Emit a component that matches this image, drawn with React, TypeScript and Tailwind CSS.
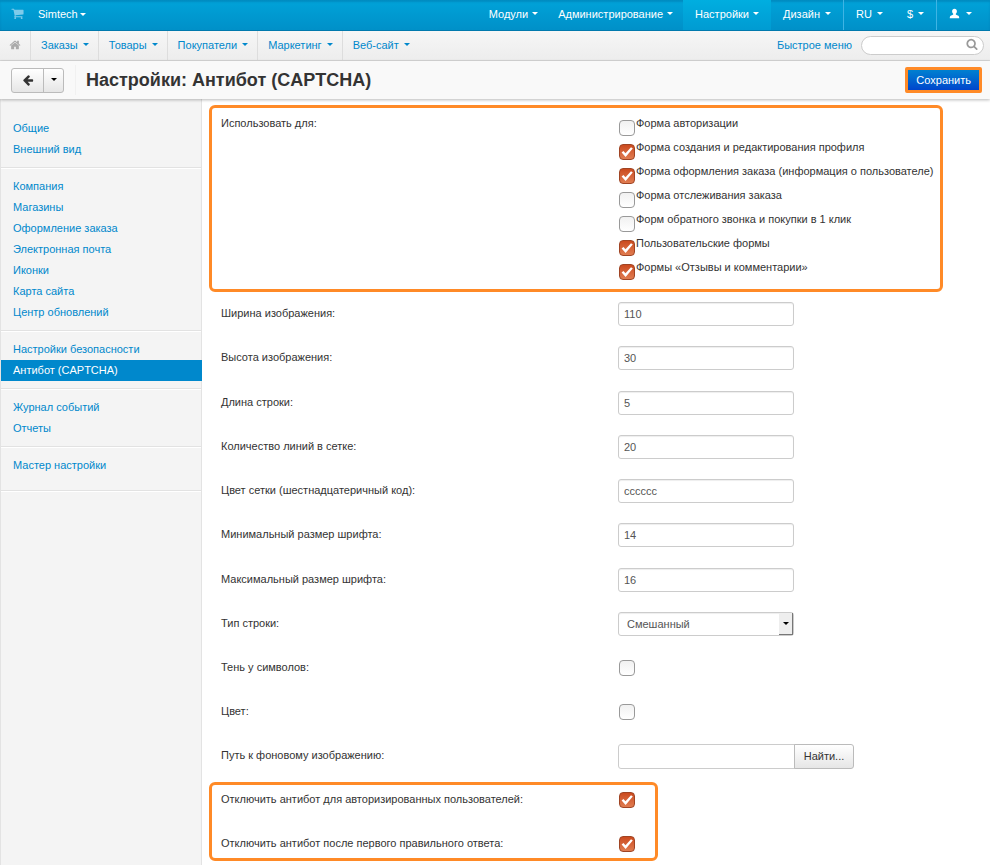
import { useId } from "react";
import type { ReactNode } from "react";

const glyphs = {
  cart: "M704 1536q0 52-38 90t-90 38-90-38-38-90 38-90 90-38 90 38 38 90zm896 0q0 52-38 90t-90 38-90-38-38-90 38-90 90-38 90 38 38 90zm128-1088v512q0 24-16.5 42.5t-40.5 21.5l-1044 122q13 60 13 70 0 16-24 64h920q26 0 45 19t19 45-19 45-45 19h-1024q-26 0-45-19t-19-45q0-11 8-31.5t16-36 21.5-40 15.5-29.5l-177-823h-204q-26 0-45-19t-19-45 19-45 45-19h256q16 0 28.5 6.5t19.5 15.5 13 24.5 8 26 5.5 29.5 4.5 26h1201q26 0 45 19t19 45z",
  home: "M1472 992v480q0 26-19 45t-45 19h-384v-384h-256v384h-384q-26 0-45-19t-19-45v-480q0-1 .5-3t.5-3l575-474 575 474q1 2 1 6zm223-69l-62 74q-8 9-21 11h-3q-13 0-21-7l-692-577-692 577q-12 8-24 7-13-2-21-11l-62-74q-8-10-7-23.5t11-21.5l719-599q32-26 76-26t76 26l244 204v-195q0-14 9-23t23-9h192q14 0 23 9t9 23v408l219 182q10 8 11 21.5t-7 23.5z",
  search:
    "M1216 832q0-185-131.5-316.5t-316.5-131.5-316.5 131.5-131.5 316.5 131.5 316.5 316.5 131.5 316.5-131.5 131.5-316.5zm512 832q0 52-38 90t-90 38q-54 0-90-38l-343-342q-179 124-399 124-143 0-273.5-55.5t-225-150-150-225-55.5-273.5 55.5-273.5 150-225 225-150 273.5-55.5 273.5 55.5 225 150 150 225 55.5 273.5q0 220-124 399l343 343q37 37 37 90z",
  arrowLeft:
    "M1664 896v128q0 53-32.5 90.5t-84.5 37.5h-704l293 294q38 36 38 90t-38 90l-75 76q-37 37-90 37-52 0-91-37l-651-652q-37-37-37-90 0-52 37-91l651-650q38-38 91-38 52 0 90 38l75 74q38 38 38 91t-38 91l-293 293h704q52 0 84.5 37.5t32.5 90.5z",
  user: "M896 128c-240 0-390 170-390 400 0 180 70 330 180 420v130c-60 60-200 100-330 160-140 65-228 150-228 426h1536c0-276-88-361-228-426-130-60-270-100-330-160v-130c110-90 180-240 180-420 0-230-150-400-390-400z",
};

function Icon({ name, className }: { name: keyof typeof glyphs; className: string }) {
  return (
    <svg viewBox="0 0 1792 1792" fill="currentColor" aria-hidden="true" className={className}>
      <path d={glyphs[name]} />
    </svg>
  );
}

function Caret() {
  return (
    <span
      aria-hidden="true"
      className="inline-block border-x-[3px] border-t-[3px] border-x-transparent border-t-current"
    />
  );
}

function Checkbox({ id, defaultChecked = false }: { id?: string; defaultChecked?: boolean }) {
  return (
    <span className="relative block size-4 shrink-0">
      <input
        id={id}
        type="checkbox"
        defaultChecked={defaultChecked}
        className="peer block size-4 appearance-none rounded-[4px] border border-[#999] bg-linear-to-b from-[#f1f1f1] to-white checked:border-[#a04423] checked:from-[#cb4a1d] checked:to-[#e07c50]"
      />
      <svg
        viewBox="0 0 16 16"
        aria-hidden="true"
        className="pointer-events-none absolute inset-0 hidden size-4 peer-checked:block"
      >
        <path d="M2.6 8.4 4.4 6.9 6.5 9.3 12 3.2 13.8 4.6 6.6 13Z" fill="#fff" />
      </svg>
    </span>
  );
}

const usages = [
  { label: "Форма авторизации", checked: false },
  { label: "Форма создания и редактирования профиля", checked: true },
  { label: "Форма оформления заказа (информация о пользователе)", checked: true },
  { label: "Форма отслеживания заказа", checked: false },
  { label: "Форм обратного звонка и покупки в 1 клик", checked: false },
  { label: "Пользовательские формы", checked: true },
  { label: "Формы «Отзывы и комментарии»", checked: true },
];

const textFields = [
  { label: "Ширина изображения:", value: "110" },
  { label: "Высота изображения:", value: "30" },
  { label: "Длина строки:", value: "5" },
  { label: "Количество линий в сетке:", value: "20" },
  { label: "Цвет сетки (шестнадцатеричный код):", value: "cccccc" },
  { label: "Минимальный размер шрифта:", value: "14" },
  { label: "Максимальный размер шрифта:", value: "16" },
];

const sections = [
  ["Общие", "Внешний вид"],
  [
    "Компания",
    "Магазины",
    "Оформление заказа",
    "Электронная почта",
    "Иконки",
    "Карта сайта",
    "Центр обновлений",
  ],
  ["Настройки безопасности", "Антибот (CAPTCHA)"],
  ["Журнал событий", "Отчеты"],
  ["Мастер настройки"],
];

const activeSection = "Антибот (CAPTCHA)";

const inputClass =
  "h-6 w-44 rounded-[3px] border border-[#ccc] bg-white px-[5px] text-[#555] shadow-[inset_0_1px_1px_rgba(0,0,0,0.07)]";

function Row({
  label,
  className = "",
  children,
}: {
  label: string;
  className?: string;
  children: (id: string) => ReactNode;
}) {
  const id = useId();
  return (
    <div className={`flex items-center ${className}`}>
      <label htmlFor={id} className="w-[397px] shrink-0 pb-[2px]">
        {label}
      </label>
      {children(id)}
    </div>
  );
}

function TopBar() {
  const wide = "flex items-center gap-1 px-2.5 pb-[3px]";
  const item = "flex items-center gap-1 px-3 pb-[3px]";
  const narrow = "flex items-center gap-[5px] px-3 pb-[3px]";
  return (
    <header className="flex h-[31px] justify-between border-b border-[#0079ad] bg-linear-to-b from-[#00a3d9] to-[#0090c8] text-white shadow-[inset_0_2px_2px_rgba(0,90,140,0.3)]">
      <div className="flex items-center pl-[11px]">
        <a href="#cart" aria-label="Корзина" className="pb-1 text-[#7fcbea]">
          <Icon name="cart" className="size-[13px]" />
        </a>
        <button type="button" className="ml-3.5 flex items-center gap-[2px] pb-[2px]">
          Simtech
          <Caret />
        </button>
      </div>
      <nav className="flex">
        <button type="button" className={wide}>
          Модули <Caret />
        </button>
        <button type="button" className={wide}>
          Администрирование <Caret />
        </button>
        <button type="button" className={`${item} bg-linear-to-b from-[#00aee0] to-[#009bd2]`}>
          Настройки <Caret />
        </button>
        <button type="button" className={narrow}>
          Дизайн <Caret />
        </button>
        <button type="button" className={`${narrow} border-l border-[#3fb4e4]`}>
          RU <Caret />
        </button>
        <button type="button" className={narrow}>
          $ <Caret />
        </button>
        <button
          type="button"
          aria-label="Профиль"
          className="flex items-center gap-[6px] border-l border-[#3fb4e4] pr-[18px] pb-[3px] pl-3"
        >
          <Icon name="user" className="size-[11px]" /> <Caret />
        </button>
      </nav>
    </header>
  );
}

function SubNav() {
  return (
    <div className="flex h-[30px] items-stretch justify-between border-b border-[#d8d8d8] bg-linear-to-b from-[#f6f6f6] to-[#ededed] text-[#0088cc]">
      <nav className="flex">
        <a
          href="#home"
          aria-label="Главная"
          className="flex w-[31px] items-center justify-center border-r border-[#ddd] pb-px text-[#aaa]"
        >
          <Icon name="home" className="size-3" />
        </a>
        {["Заказы", "Товары", "Покупатели", "Маркетинг"].map((name) => (
          <button
            key={name}
            type="button"
            className="flex items-center gap-[5px] border-r border-[#ddd] pr-[9px] pb-[2px] pl-2.5"
          >
            {name} <Caret />
          </button>
        ))}
        <button type="button" className="flex items-center gap-[5px] px-2.5 pb-[2px]">
          Веб-сайт <Caret />
        </button>
      </nav>
      <div className="flex items-center gap-[9px] pr-1.5">
        <a href="#quick" className="pb-[2px]">
          Быстрое меню
        </a>
        <div className="relative">
          <input
            type="search"
            aria-label="Поиск"
            className="block h-[19px] w-[123px] rounded-full border border-[#ccc] bg-white pr-6 pl-2 text-[#555]"
          />
          <Icon name="search" className="absolute top-[2px] right-[6px] size-3 text-[#999]" />
        </div>
      </div>
    </div>
  );
}

function TitleBar() {
  return (
    <div className="relative flex h-[38px] items-center justify-between bg-[#f9f9f9] pr-2 pl-[11px] shadow-[0_1px_3px_rgba(0,0,0,0.28)]">
      <div className="flex items-center">
        <div className="flex h-[25px] rounded-[3px] border border-[#bbb] bg-linear-to-b from-white to-[#e6e6e6] text-[#333]">
          <button
            type="button"
            aria-label="Назад"
            className="flex w-8 items-center justify-center border-r border-[#bbb]"
          >
            <Icon name="arrowLeft" className="size-3" />
          </button>
          <button
            type="button"
            aria-label="Последние страницы"
            className="flex w-[19px] items-center justify-center pb-px text-black"
          >
            <Caret />
          </button>
        </div>
        <h1 className="ml-[11px] border-l border-[#f1f1f1] pl-2.5 text-[18px] leading-[30px] font-bold text-[#333]">
          Настройки: Антибот (CAPTCHA)
        </h1>
      </div>
      <button
        type="button"
        className="h-[26px] rounded-[2px] border-[3px] border-[#ff8a27] bg-linear-to-b from-[#0080d0] to-[#0044cc] px-2 text-white"
      >
        Сохранить
      </button>
    </div>
  );
}

function Sidebar() {
  return (
    <nav className="w-[202px] shrink-0 border-x border-[#e3e3e3] bg-[#f4f4f4] pt-3 text-[#0088cc]">
      {sections.map((names) => (
        <ul
          key={names[0]}
          className="border-b border-[#e2e2e2] py-[7px] shadow-[0_1px_0_#fff] not-first:mt-px last:pb-3.5"
        >
          {names.map((name) => (
            <li key={name}>
              <a
                href="#section"
                aria-current={name === activeSection ? "page" : undefined}
                className="block px-3 leading-[21px] aria-[current=page]:-mr-px aria-[current=page]:bg-[#0088cc] aria-[current=page]:text-white"
              >
                {name}
              </a>
            </li>
          ))}
        </ul>
      ))}
    </nav>
  );
}

function UsageOption({ label, checked }: { label: string; checked: boolean }) {
  const id = useId();
  return (
    <li className="flex h-6 items-end gap-px">
      <Checkbox id={id} defaultChecked={checked} />
      <label htmlFor={id} className="self-start leading-[22px]">
        {label}
      </label>
    </li>
  );
}

export default function App() {
  return (
    <div className="flex min-h-screen flex-col bg-white font-['Liberation_Sans',Arial,sans-serif] text-[11px] leading-4 text-[#333]">
      <TopBar />
      <SubNav />
      <TitleBar />
      <div className="flex grow">
        <Sidebar />
        <main className="min-w-0 grow pt-[6px] pb-1">
          <fieldset className="ml-[7px] w-[734px] max-w-full rounded-[6px] border-[3px] border-[#ff8a27] pt-1 pb-[9px] pl-[9px]">
            <div className="flex">
              <span id="usage-label" className="w-[398px] shrink-0 leading-[22px]">
                Использовать для:
              </span>
              <ul aria-labelledby="usage-label">
                {usages.map((usage) => (
                  <UsageOption key={usage.label} {...usage} />
                ))}
              </ul>
            </div>
          </fieldset>

          <form className="pl-[19px]">
            <div className="grid min-h-[354px] auto-rows-fr">
              {textFields.map((field) => (
                <Row key={field.label} label={field.label}>
                  {(id) => (
                    <input id={id} type="text" defaultValue={field.value} className={inputClass} />
                  )}
                </Row>
              ))}
              <Row label="Тип строки:">
                {(id) => (
                  <div className="relative">
                    <select id={id} className={`${inputClass} block appearance-none pl-2`}>
                      <option>Смешанный</option>
                      <option>Цифры</option>
                      <option>Буквы</option>
                    </select>
                    <span className="pointer-events-none absolute inset-y-px right-px flex w-3.5 items-center justify-center border-r border-b border-[#777] bg-[#eee] text-black">
                      <Caret />
                    </span>
                  </div>
                )}
              </Row>
            </div>
            {["Тень у символов:", "Цвет:"].map((label) => (
              <Row key={label} label={label} className="h-11">
                {(id) => (
                  <div className="pl-px">
                    <Checkbox id={id} />
                  </div>
                )}
              </Row>
            ))}
            <Row label="Путь к фоновому изображению:" className="h-11">
              {(id) => (
                <div className="flex">
                  <input
                    id={id}
                    type="text"
                    className="h-[25px] w-[177px] rounded-l-[3px] border border-[#ccc] bg-white px-[5px]"
                  />
                  <button
                    type="button"
                    className="-ml-px h-[25px] w-[60px] rounded-r-[3px] border border-[#bbb] bg-linear-to-b from-white to-[#e6e6e6]"
                  >
                    Найти...
                  </button>
                </div>
              )}
            </Row>
          </form>

          <div className="mt-1 ml-[7px] flex w-[449px] flex-col gap-4 rounded-[6px] border-[3px] border-[#ff8a27] pt-px pl-[9px]">
            {[
              "Отключить антибот для авторизированных пользователей:",
              "Отключить антибот после первого правильного ответа:",
            ].map((label) => (
              <Row key={label} label={label} className="h-7">
                {(id) => (
                  <div className="pl-px">
                    <Checkbox id={id} defaultChecked />
                  </div>
                )}
              </Row>
            ))}
          </div>
        </main>
      </div>
    </div>
  );
}
